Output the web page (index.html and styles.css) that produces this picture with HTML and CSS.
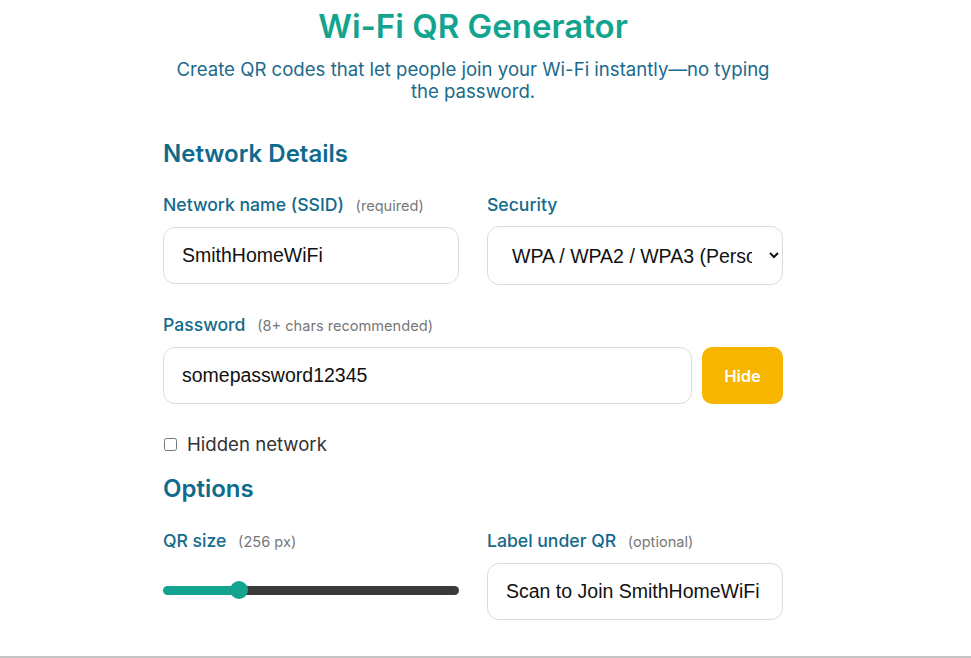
FILE: index.html
```html
<!DOCTYPE html>
<html lang="en">
<head>
<meta charset="utf-8">
<title>Wi-Fi QR Generator</title>
<link rel="stylesheet" href="styles.css">
</head>
<body>
<main class="app">
  <header class="hero">
    <h1 class="title">Wi-Fi QR Generator</h1>
    <p class="subtitle">Create QR codes that let people join your Wi-Fi instantly—no typing the password.</p>
  </header>

  <section class="panel">
    <h2 class="section-title">Network Details</h2>
    <div class="grid-2">
      <div class="field">
        <label class="label">Network name (SSID) <span class="hint">(required)</span></label>
        <input class="input" type="text" value="SmithHomeWiFi">
      </div>
      <div class="field">
        <label class="label">Security</label>
        <select class="input select">
          <option>WPA / WPA2 / WPA3 (Personal)</option>
          <option>WEP</option>
          <option>None</option>
        </select>
      </div>
    </div>

    <div class="field field-wide">
      <label class="label">Password <span class="hint">(8+ chars recommended)</span></label>
      <div class="pw-row">
        <input class="input pw-input" type="text" value="somepassword12345">
        <button class="btn-hide" type="button">Hide</button>
      </div>
    </div>

    <label class="check">
      <input type="checkbox" class="checkbox">
      <span>Hidden network</span>
    </label>

    <h2 class="section-title options-title">Options</h2>
    <div class="grid-2">
      <div class="field">
        <label class="label">QR size <span class="hint">(256 px)</span></label>
        <div class="range-wrap">
          <input class="range" type="range" min="64" max="864" value="256">
        </div>
      </div>
      <div class="field">
        <label class="label">Label under QR <span class="hint">(optional)</span></label>
        <input class="input" type="text" value="Scan to Join SmithHomeWiFi">
      </div>
    </div>
  </section>
</main>
<div class="next-card"></div>
</body>
</html>
```

FILE: styles.css
```css
* { box-sizing: border-box; }

html, body {
  margin: 0;
  padding: 0;
  background: #ffffff;
}

body {
  font-family: Inter, "Noto Sans", sans-serif;
  color: #333;
  overflow: hidden;
  height: 658px;
}

.app {
  width: 620px;
  margin-left: 163px;
}

.hero {
  text-align: center;
  padding-top: 6px;
}

.title {
  margin: 0;
  font-size: 33px;
  font-weight: 600;
  line-height: 40px;
  color: #12a48e;
  letter-spacing: 0;
}

.subtitle {
  margin: 12px auto 0;
  max-width: 610px;
  font-size: 18.6px;
  line-height: 22px;
  color: #1b6a8c;
}

.panel {
  padding-top: 37px;
}

.section-title {
  margin: 0;
  font-size: 24px;
  line-height: 30px;
  font-weight: 600;
  color: #0f6a8d;
}

.grid-2 {
  display: grid;
  grid-template-columns: 1fr 1fr;
  column-gap: 28px;
  margin-top: 25px;
}

.field {
  display: flex;
  flex-direction: column;
}

.label {
  font-size: 17.6px;
  line-height: 22px;
  font-weight: 500;
  color: #136a8b;
  margin-bottom: 10px;
}

.hint {
  font-size: 14.6px;
  font-weight: 400;
  color: #777;
  margin-left: 7px;
}

.input {
  height: 57px;
  width: 100%;
  border: 1px solid #dcdcdc;
  border-radius: 12px;
  padding: 0 18px;
  font-family: "Liberation Sans", Arial, sans-serif;
  font-size: 19.5px;
  color: #111;
  background: #fff;
  outline: none;
}

.select {
  height: 59px;
  padding: 0 14px 0 20px;
  appearance: auto;
}

.field-wide {
  margin-top: 29px;
}

.pw-row {
  display: flex;
  gap: 10px;
}

.pw-input {
  flex: 1;
  height: 57px;
}

.btn-hide {
  width: 81px;
  height: 57px;
  border: none;
  border-radius: 10px;
  background: #f7b500;
  color: #fff;
  font-family: Inter, sans-serif;
  font-size: 16.5px;
  font-weight: 600;
}

.check {
  display: flex;
  align-items: center;
  gap: 10px;
  margin-top: 29px;
  font-size: 18.6px;
  line-height: 22px;
  color: #333;
}

.checkbox {
  margin: 0 0 0 1px;
  width: 13px;
  height: 13px;
}

.options-title {
  margin-top: 19px;
}

.options-title + .grid-2 {
  margin-top: 26px;
}

.range-wrap {
  height: 54px;
  display: flex;
  align-items: center;
}

.range {
  -webkit-appearance: none;
  appearance: none;
  width: 100%;
  height: 9px;
  margin: 0;
  border-radius: 5px;
  background: linear-gradient(to right, #13a48f 0%, #13a48f 25.5%, #3a3a3a 25.5%, #3a3a3a 100%);
  outline: none;
}

.range::-webkit-slider-thumb {
  -webkit-appearance: none;
  appearance: none;
  width: 18px;
  height: 18px;
  border-radius: 50%;
  background: #13a48f;
  border: none;
}

.next-card {
  position: absolute;
  left: 0;
  right: 0;
  top: 656px;
  height: 2px;
  border-top: 2px solid #c4c4c4;
}
```
